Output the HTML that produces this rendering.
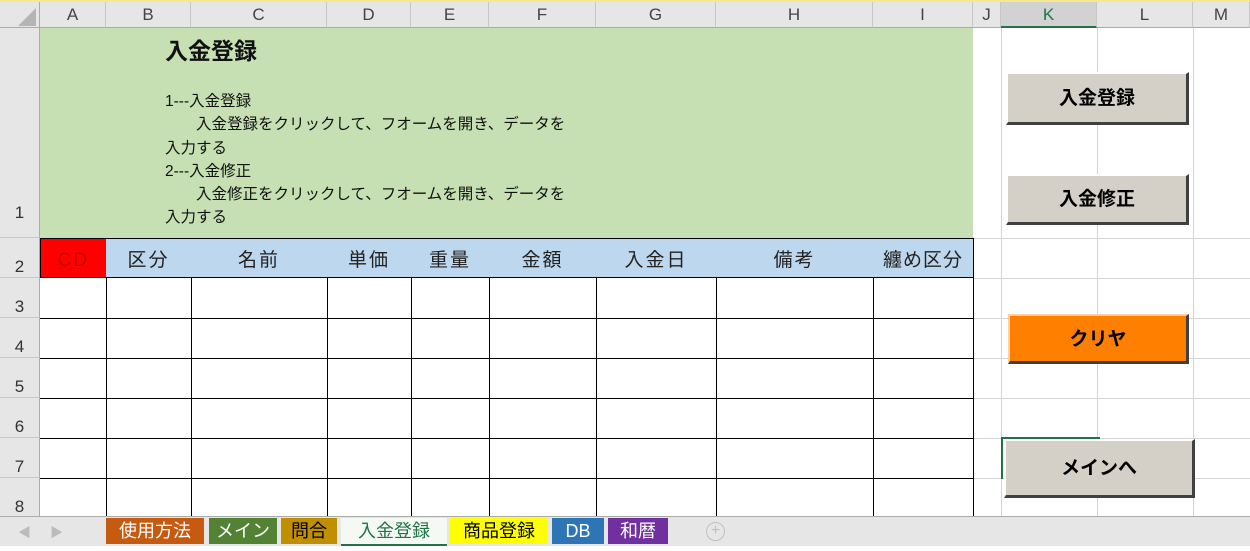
<!DOCTYPE html>
<html><head><meta charset="utf-8"><style>
*{margin:0;padding:0;box-sizing:border-box}
body{width:1250px;height:551px;overflow:hidden;background:#fff;position:relative;font-family:"Liberation Sans","Noto Sans CJK JP",sans-serif}
.a{position:absolute}
.ch{position:absolute;top:2px;height:26px;background:#e6e6e6;border-right:1px solid #c6c6c6;border-bottom:1px solid #ababab;font-size:17px;color:#444;text-align:center;line-height:26px}
.rh{position:absolute;left:0;width:40px;background:#e6e6e6;border-bottom:1px solid #c6c6c6;border-right:1px solid #ababab;font-size:17px;color:#333;text-align:center}
.hl{position:absolute;height:1px;background:#d4d4d4}
.vl{position:absolute;width:1px;background:#d4d4d4}
.bk{background:#000}
.hd{position:absolute;top:238px;height:40px;background:#bdd7ee;border-right:1px solid #000;border-top:1px solid #000;border-bottom:1px solid #000;font-size:19px;text-align:center;line-height:44px;letter-spacing:2px;color:#222}
.btn{position:absolute;background:#d4d0c8;border-top:2px solid #fff;border-left:2px solid #fff;border-right:3px solid #404040;border-bottom:3px solid #404040;font-size:19px;font-weight:bold;text-align:center;color:#000}
.tab{position:absolute;top:518px;height:26px;font-size:18px;line-height:26px;text-align:center}
</style></head><body>
<div class="a" style="left:0;top:0;width:1250px;height:2px;background:#f5e98a"></div>
<div class="a" style="left:0;top:2px;width:40px;height:26px;background:#e6e6e6;border-right:1px solid #ababab;border-bottom:1px solid #ababab"></div>
<svg class="a" style="left:18px;top:8px" width="18" height="18"><polygon points="18,0 18,18 0,18" fill="#b4b4b4"/></svg>
<div class="ch" style="left:40px;width:66px">A</div>
<div class="ch" style="left:106px;width:85px">B</div>
<div class="ch" style="left:191px;width:136px">C</div>
<div class="ch" style="left:327px;width:84px">D</div>
<div class="ch" style="left:411px;width:78px">E</div>
<div class="ch" style="left:489px;width:107px">F</div>
<div class="ch" style="left:596px;width:120px">G</div>
<div class="ch" style="left:716px;width:157px">H</div>
<div class="ch" style="left:873px;width:100px">I</div>
<div class="ch" style="left:973px;width:28px">J</div>
<div class="ch" style="left:1001px;width:96px;background:#d2d2d2;border-bottom:2px solid #217346;color:#217346">K</div>
<div class="ch" style="left:1097px;width:96px">L</div>
<div class="ch" style="left:1193px;width:57px">M</div>
<div class="rh" style="top:28px;height:210px;line-height:370px">1</div>
<div class="rh" style="top:238px;height:40px;line-height:58px">2</div>
<div class="rh" style="top:278px;height:40px;line-height:58px">3</div>
<div class="rh" style="top:318px;height:40px;line-height:58px">4</div>
<div class="rh" style="top:358px;height:40px;line-height:58px">5</div>
<div class="rh" style="top:398px;height:40px;line-height:58px">6</div>
<div class="rh" style="top:438px;height:40px;line-height:58px">7</div>
<div class="rh" style="top:478px;height:40px;line-height:58px">8</div>
<div class="vl" style="left:1001px;top:28px;height:490px"></div>
<div class="vl" style="left:1097px;top:28px;height:490px"></div>
<div class="vl" style="left:1193px;top:28px;height:490px"></div>
<div class="hl" style="left:973px;top:238px;width:277px"></div>
<div class="hl" style="left:973px;top:278px;width:277px"></div>
<div class="hl" style="left:973px;top:318px;width:277px"></div>
<div class="hl" style="left:973px;top:358px;width:277px"></div>
<div class="hl" style="left:973px;top:398px;width:277px"></div>
<div class="hl" style="left:973px;top:438px;width:277px"></div>
<div class="hl" style="left:973px;top:478px;width:277px"></div>
<div class="a" style="left:40px;top:28px;width:933px;height:210px;background:#c6e0b4"></div>
<div class="a" style="left:165px;top:32px;font-size:23px;font-weight:bold;color:#111">入金登録</div>
<div class="a" style="left:165px;top:90px;font-size:15.5px;line-height:23.3px;color:#111;white-space:pre">1---入金登録
　　入金登録をクリックして、フオームを開き、データを
入力する
2---入金修正
　　入金修正をクリックして、フオームを開き、データを
入力する</div>
<div class="hd" style="left:40px;width:67px;background:#ff0000;border-left:1px solid #000;color:#c00000">CD</div>
<div class="hd" style="left:106px;width:86px">区分</div>
<div class="hd" style="left:191px;width:137px">名前</div>
<div class="hd" style="left:327px;width:85px">単価</div>
<div class="hd" style="left:411px;width:79px">重量</div>
<div class="hd" style="left:489px;width:108px">金額</div>
<div class="hd" style="left:596px;width:121px">入金日</div>
<div class="hd" style="left:716px;width:158px">備考</div>
<div class="hd" style="left:873px;width:101px;letter-spacing:1px">纏め区分</div>
<div class="a bk" style="left:40px;top:318px;width:933px;height:1px"></div>
<div class="a bk" style="left:40px;top:358px;width:933px;height:1px"></div>
<div class="a bk" style="left:40px;top:398px;width:933px;height:1px"></div>
<div class="a bk" style="left:40px;top:438px;width:933px;height:1px"></div>
<div class="a bk" style="left:40px;top:478px;width:933px;height:1px"></div>
<div class="a bk" style="left:106px;top:278px;width:1px;height:238px"></div>
<div class="a bk" style="left:191px;top:278px;width:1px;height:238px"></div>
<div class="a bk" style="left:327px;top:278px;width:1px;height:238px"></div>
<div class="a bk" style="left:411px;top:278px;width:1px;height:238px"></div>
<div class="a bk" style="left:489px;top:278px;width:1px;height:238px"></div>
<div class="a bk" style="left:596px;top:278px;width:1px;height:238px"></div>
<div class="a bk" style="left:716px;top:278px;width:1px;height:238px"></div>
<div class="a bk" style="left:873px;top:278px;width:1px;height:238px"></div>
<div class="a bk" style="left:973px;top:238px;width:1px;height:313px"></div>
<div class="btn" style="left:1006px;top:72px;width:183px;height:53px;line-height:50px">入金登録</div>
<div class="btn" style="left:1006px;top:174px;width:183px;height:51px;line-height:48px">入金修正</div>
<div class="btn" style="left:1008px;top:314px;width:181px;height:50px;line-height:47px;background:#ff8000;border-top-color:#ffd0a0;border-left-color:#ffd0a0">クリヤ</div>
<div class="a" style="left:1001px;top:437px;width:99px;height:2px;background:#217346"></div>
<div class="a" style="left:1001px;top:437px;width:2px;height:42px;background:#217346"></div>
<div class="btn" style="left:1004px;top:439px;width:191px;height:59px;line-height:56px">メインへ</div>
<div class="a" style="left:0;top:516px;width:1250px;height:30px;background:#e6e6e6;border-top:1px solid #ababab"></div>
<div class="a" style="left:0;top:546px;width:1250px;height:5px;background:#fff"></div>
<div class="a" style="left:18px;top:522px;font-size:13px;color:#bbb">◀</div>
<div class="a" style="left:50px;top:522px;font-size:13px;color:#bbb">▶</div>
<div class="tab" style="left:106px;width:98px;background:#c55a11;color:#fff">使用方法</div>
<div class="tab" style="left:209px;width:68px;background:#548235;color:#fff">メイン</div>
<div class="tab" style="left:281px;width:56px;background:#bf8f00;color:#000">問合</div>
<div class="tab" style="left:341px;width:106px;background:#f4f9f4;color:#217346;height:28px;border-bottom:2px solid #217346">入金登録</div>
<div class="tab" style="left:450px;width:98px;background:#ffff00;color:#000">商品登録</div>
<div class="tab" style="left:552px;width:52px;background:#2e75b6;color:#fff">DB</div>
<div class="tab" style="left:608px;width:60px;background:#7030a0;color:#fff">和暦</div>
<div class="a" style="left:706px;top:522px;width:19px;height:19px;border:1px solid #c0c0c0;border-radius:50%;color:#c0c0c0;font-size:16px;line-height:16px;text-align:center">+</div>
</body></html>
